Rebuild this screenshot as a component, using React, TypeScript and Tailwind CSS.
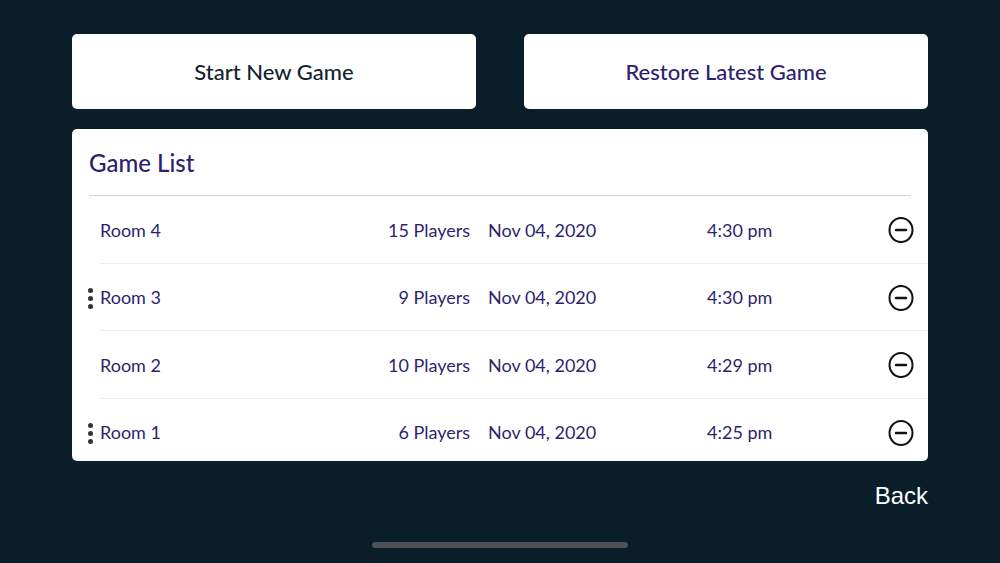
import React from "react";

const rows = [
  { room: "Room 4", players: "15 Players", date: "Nov 04, 2020", time: "4:30 pm", dots: false },
  { room: "Room 3", players: "9 Players", date: "Nov 04, 2020", time: "4:30 pm", dots: true },
  { room: "Room 2", players: "10 Players", date: "Nov 04, 2020", time: "4:29 pm", dots: false },
  { room: "Room 1", players: "6 Players", date: "Nov 04, 2020", time: "4:25 pm", dots: true },
];

function MinusCircle() {
  return (
    <svg width="28" height="28" viewBox="0 0 28 28" fill="none">
      <ellipse cx="14" cy="14" rx="11.5" ry="12" stroke="#111" strokeWidth="2" />
      <line x1="9" y1="14" x2="19" y2="14" stroke="#111" strokeWidth="2.4" strokeLinecap="round" />
    </svg>
  );
}

export default function App() {
  return (
    <div
      className="w-[1000px] h-[563px] bg-[#0a1e29] flex flex-col px-[72px] pt-[34px]"
      style={{ fontFamily: "Lato, 'Noto Sans', sans-serif" }}
    >
      <div className="flex gap-[48px]">
        <div className="flex-1 h-[75px] bg-white rounded-[5px] flex items-center justify-center text-[22px] font-medium text-[#152230]">
          Start New Game
        </div>
        <div className="flex-1 h-[75px] bg-white rounded-[5px] flex items-center justify-center text-[22px] font-medium text-[#2f1f6e]">
          Restore Latest Game
        </div>
      </div>
      <div className="mt-[20px] bg-white rounded-[5px] h-[332px] flex flex-col">
        <div className="mx-[17px] h-[67px] border-b border-[#cfcfcf] flex items-center text-[24px] font-medium text-[#2f1f6e] pt-[2px] shrink-0">
          Game List
        </div>
        {rows.map((r, i) => (
          <div
            key={r.room}
            className={`ml-[28px] flex items-start pt-[20px] text-[18px] text-[#2f1f6e] relative ${i < rows.length - 1 ? "h-[67.5px] border-b border-[#ececec] shrink-0" : "flex-1"}`}
          >
            {r.dots && (
              <div className="absolute left-[-12px] top-[24px] flex flex-col gap-[3px]">
                <span className="w-[5px] h-[5px] rounded-full bg-[#333]" />
                <span className="w-[5px] h-[5px] rounded-full bg-[#333]" />
                <span className="w-[5px] h-[5px] rounded-full bg-[#333]" />
              </div>
            )}
            <div className="w-[200px] h-[28px] flex items-center">{r.room}</div>
            <div className="w-[170px] h-[28px] flex items-center justify-end">{r.players}</div>
            <div className="ml-[18px] w-[219px] h-[28px] flex items-center">{r.date}</div>
            <div className="w-[100px] h-[28px] flex items-center">{r.time}</div>
            <div className="ml-auto mr-[13px] h-[28px] flex items-center">
              <MinusCircle />
            </div>
          </div>
        ))}
      </div>
      <div className="flex justify-end mt-[23px] text-[24px] text-white leading-none">
        <span style={{ fontFamily: "'Liberation Sans', Arial, sans-serif" }}>Back</span>
      </div>
      <div className="flex justify-center mt-[34px]">
        <div className="w-[256px] h-[6px] rounded-full bg-[#4d5054]" />
      </div>
    </div>
  );
}
